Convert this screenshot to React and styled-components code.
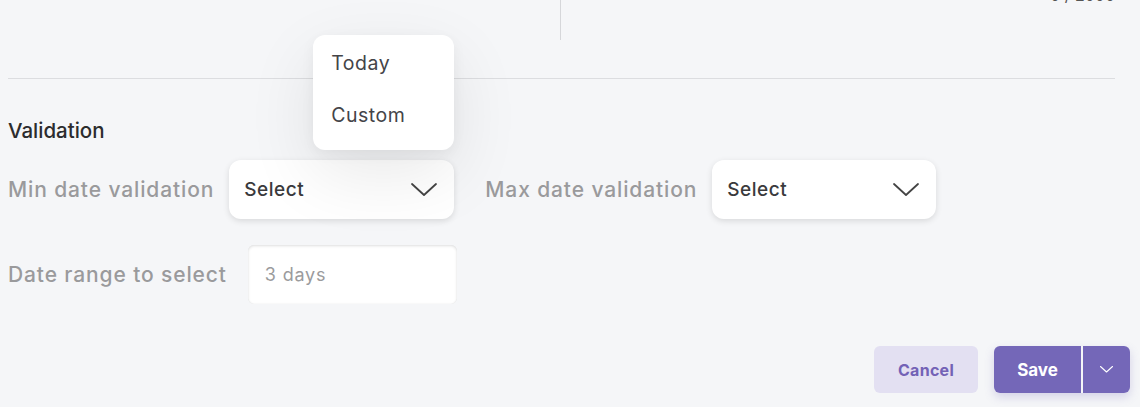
import React from "react";
import styled, { createGlobalStyle } from "styled-components";

const Global = createGlobalStyle`
  html, body { margin: 0; padding: 0; background: #f5f6f8; }
  body { font-family: Inter, "Noto Sans", sans-serif; overflow: hidden; }
  * { box-sizing: border-box; }
`;

const Page = styled.div`
  width: 1140px;
  height: 407px;
  padding: 0 25px 0 8px;
  position: relative;
`;

const TopRow = styled.div`
  display: flex;
  height: 40px;
`;

const LeftCol = styled.div`
  width: 553px;
  border-right: 1px solid #d6d7da;
`;

const RightCol = styled.div`
  flex: 1;
  display: flex;
  justify-content: flex-end;
  align-items: flex-start;
`;

const Counter = styled.span`
  margin-top: -14px;
  font-size: 16px;
  line-height: 18px;
  color: #555;
`;

const Divider = styled.hr`
  margin: 38px 0 0;
  border: 0;
  border-top: 1px solid #dcdde0;
`;

const Heading = styled.h3`
  margin: 40px 0 0;
  font-size: 20.5px;
  line-height: 24px;
  font-weight: 500;
  color: #2c2c2e;
`;

const Row = styled.div`
  display: flex;
  align-items: center;
  gap: ${(p) => p.$gap || 15}px;
  margin-top: ${(p) => p.$mt || 0}px;
`;

const Label = styled.span`
  font-size: 21px;
  letter-spacing: 0.88px;
  color: #9a9a9c;
  font-weight: 500;
  white-space: nowrap;
  margin-left: ${(p) => p.$ml || 0}px;
`;

const SelectWrap = styled.div`
  position: relative;
`;

const SelectBox = styled.div`
  width: ${(p) => p.$w}px;
  height: 59px;
  background: #fff;
  border-radius: 12px;
  box-shadow: 0 2px 6px rgba(0, 0, 0, 0.12);
  display: flex;
  align-items: center;
  justify-content: space-between;
  padding: 0 17px 0 15px;
  font-size: 19px;
  letter-spacing: 0.5px;
  font-weight: 500;
  color: #3a3a3c;
`;

const Menu = styled.div`
  position: absolute;
  left: 84px;
  top: -125px;
  width: 141px;
  height: 115px;
  background: #fff;
  border-radius: 12px;
  box-shadow: 0 24px 70px rgba(0, 0, 0, 0.09), 0 4px 14px rgba(0, 0, 0, 0.05);
  padding: 14px 0 0 18px;
  z-index: 2;
`;

const MenuItem = styled.div`
  font-size: 19.5px;
  letter-spacing: 0.5px;
  line-height: 52px;
  height: 52px;
  color: #444448;
  margin-top: ${(p) => (p.$first ? -12 : 0)}px;
`;

const TextInput = styled.div`
  width: 209px;
  height: 59px;
  background: #fff;
  border-radius: 6px;
  box-shadow: inset 0 1px 3px rgba(0, 0, 0, 0.12), inset 0 0 1px rgba(0, 0, 0, 0.08);
  display: flex;
  align-items: center;
  padding-left: 17px;
  font-size: 18px;
  letter-spacing: 0.8px;
  color: #9b9b9d;
`;

const Footer = styled.div`
  display: flex;
  justify-content: flex-end;
  gap: 16px;
  margin: 42px -15px 0 0;
`;

const CancelBtn = styled.button`
  width: 104px;
  height: 47px;
  border: 0;
  border-radius: 6px;
  background: #e3e0f2;
  color: #7362b6;
  font-family: inherit;
  font-size: 16px;
  letter-spacing: 0.3px;
  font-weight: 700;
`;

const Split = styled.div`
  display: flex;
  gap: 2px;
  border-radius: 6px;
  overflow: hidden;
  box-shadow: 0 4px 10px rgba(116, 104, 184, 0.25);
`;

const SaveBtn = styled.button`
  width: 87px;
  height: 47px;
  border: 0;
  background: #7467b8;
  color: #fff;
  font-family: inherit;
  font-size: 17px;
  font-weight: 700;
`;

const ArrowBtn = styled.button`
  width: 47px;
  height: 47px;
  border: 0;
  background: #7467b8;
  display: flex;
  align-items: center;
  justify-content: center;
`;

const Chevron = ({ size = 26, color = "#444", sw = 1.8 }) => (
  <svg width={size} height={size / 2} viewBox="0 0 26 13" fill="none">
    <path d="M1 1 L13 12 L25 1" stroke={color} strokeWidth={sw} strokeLinecap="round" strokeLinejoin="round" />
  </svg>
);

export default function App() {
  return (
    <Page>
      <Global />
      <TopRow>
        <LeftCol />
        <RightCol>
          <Counter>0 / 2000</Counter>
        </RightCol>
      </TopRow>
      <Divider />
      <Heading>Validation</Heading>
      <Row $mt={17} $gap={15}>
        <Label>Min date validation</Label>
        <SelectWrap>
          <Menu>
            <MenuItem $first>Today</MenuItem>
            <MenuItem>Custom</MenuItem>
          </Menu>
          <SelectBox $w={225}>
            Select
            <Chevron />
          </SelectBox>
        </SelectWrap>
        <Label $ml={16}>Max date validation</Label>
        <SelectBox $w={224}>
          Select
          <Chevron />
        </SelectBox>
      </Row>
      <Row $mt={26} $gap={21}>
        <Label>Date range to select</Label>
        <TextInput>3 days</TextInput>
      </Row>
      <Footer>
        <CancelBtn>Cancel</CancelBtn>
        <Split>
          <SaveBtn>Save</SaveBtn>
          <ArrowBtn>
            <Chevron size={13} color="#fff" sw={2.2} />
          </ArrowBtn>
        </Split>
      </Footer>
    </Page>
  );
}
